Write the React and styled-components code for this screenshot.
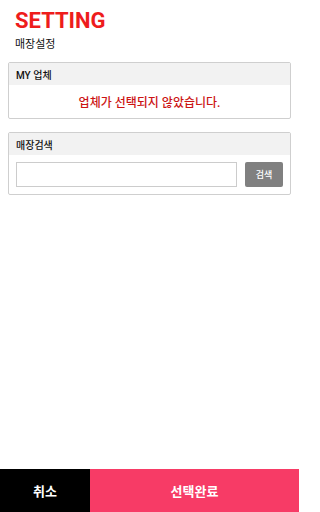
import styled, { createGlobalStyle } from 'styled-components';

const GlobalStyle = createGlobalStyle`
	html, body {
		margin: 0;
		padding: 0;
		background: #fff;
	}
	body {
		font-family: Roboto, 'Noto Sans CJK KR', sans-serif;
		color: #111;
	}
	* {
		box-sizing: border-box;
	}
`;

const Page = styled.div`
	width: 299px;
	height: 100vh;
	display: flex;
	flex-direction: column;
`;

const Header = styled.div`
	padding: 8px 15px 0;
`;

const Title = styled.h1`
	margin: 0;
	font-size: 22px;
	line-height: 26px;
	font-weight: 700;
	color: #ee1c1c;
`;

const SubTitle = styled.div`
	margin-top: 3px;
	font-size: 11px;
	line-height: 16px;
	font-weight: 400;
`;

const Content = styled.div`
	padding: 9px 8px 0;
	display: flex;
	flex-direction: column;
	gap: 13px;
`;

const Panel = styled.div`
	border: 1px solid #cfcfcf;
	border-radius: 2px;
	background: #fff;
`;

const PanelHead = styled.div`
	height: 22px;
	padding: 0 7px;
	display: flex;
	align-items: center;
	background: #f2f2f2;
	font-size: 10px;
	font-weight: 500;
`;

const Message = styled.div`
	height: 33px;
	display: flex;
	align-items: center;
	justify-content: center;
	font-size: 12px;
	font-weight: 500;
	color: #cc1414;
`;

const SearchRow = styled.div`
	display: flex;
	gap: 8px;
	padding: 7px 7px 7px;
`;

const SearchInput = styled.input`
	flex: 1;
	min-width: 0;
	height: 25px;
	border: 1px solid #cccccc;
	padding: 0 5px;
	font-size: 11px;
	outline: none;
`;

const SearchButton = styled.button`
	width: 38px;
	height: 25px;
	border: none;
	border-radius: 2px;
	background: #808080;
	color: #fff;
	font-family: inherit;
	font-size: 9px;
	font-weight: 500;
	padding: 0;
`;

const Footer = styled.div`
	margin-top: auto;
	height: 43px;
	display: flex;
`;

const FooterButton = styled.button`
	flex: ${({ $wide }) => ($wide ? '1' : '0 0 90px')};
	border: none;
	background: ${({ $wide }) => ($wide ? '#f73b66' : '#000')};
	color: #fff;
	font-family: inherit;
	font-size: 13px;
	font-weight: 700;
	padding: 0;
`;

export default function App() {
	return (
		<>
			<GlobalStyle />
			<Page>
				<Header>
					<Title>SETTING</Title>
					<SubTitle>매장설정</SubTitle>
				</Header>
				<Content>
					<Panel>
						<PanelHead>MY 업체</PanelHead>
						<Message>업체가 선택되지 않았습니다.</Message>
					</Panel>
					<Panel>
						<PanelHead>매장검색</PanelHead>
						<SearchRow>
							<SearchInput type="text" />
							<SearchButton>검색</SearchButton>
						</SearchRow>
					</Panel>
				</Content>
				<Footer>
					<FooterButton>취소</FooterButton>
					<FooterButton $wide>선택완료</FooterButton>
				</Footer>
			</Page>
		</>
	);
}
